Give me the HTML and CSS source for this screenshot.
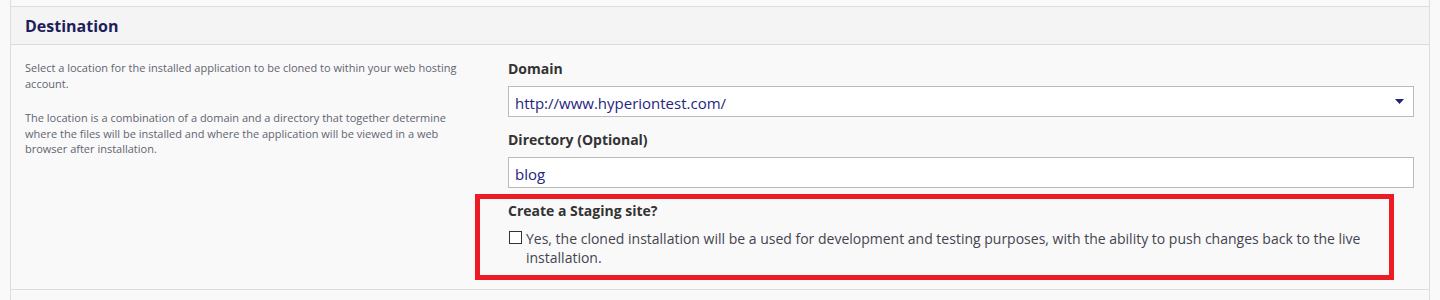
FILE: index.html
```html
<!DOCTYPE html>
<html lang="en">
<head>
<meta charset="utf-8">
<title>Destination</title>
<link rel="stylesheet" href="styles.css">
</head>
<body>
<div class="wrap">
  <section class="panel">
    <header class="panel-head">
      <h2 class="panel-title">Destination</h2>
    </header>
    <div class="panel-body">
      <div class="help">
        <p>Select a location for the installed application to be cloned to within your web hosting account.</p>
        <p>The location is a combination of a domain and a directory that together determine where the files will be installed and where the application will be viewed in a web browser after installation.</p>
      </div>
      <div class="fields">
        <div class="group">
          <div class="label">Domain</div>
          <div class="control select">
            <span class="value">http://www.hyperiontest.com/</span>
            <svg class="caret" width="9" height="5" viewBox="0 0 9 5"><path d="M0 0H9L4.5 5Z" fill="#23237f"/></svg>
          </div>
        </div>
        <div class="group">
          <div class="label">Directory (Optional)</div>
          <div class="control">
            <span class="value">blog</span>
          </div>
        </div>
        <div class="staging">
          <div class="label">Create a Staging site?</div>
          <div class="check-row">
            <span class="checkbox"></span>
            <span class="check-text">Yes, the cloned installation will be a used for development and testing purposes, with the ability to push changes back to the live installation.</span>
          </div>
        </div>
      </div>
    </div>
  </section>
</div>
</body>
</html>
```
FILE: styles.css
```css
html, body {
  margin: 0;
  padding: 0;
  background: #f9f9f9;
}
body {
  font-family: "Open Sans", "Liberation Sans", sans-serif;
  height: 300px;
  overflow: hidden;
}
.wrap {
  margin-left: 10px;
  width: 1420px;
  box-sizing: border-box;
  border-left: 1px solid #dddddd;
  border-right: 1px solid #dddddd;
  padding-top: 6px;
  min-height: 300px;
}
.panel-head {
  background: #f4f4f4;
  border-top: 1px solid #dddddd;
  border-bottom: 1px solid #dddddd;
  height: 37px;
  padding: 0 14px;
  display: flex;
  align-items: center;
}
.panel-title {
  margin: 0;
  font-size: 16px;
  font-weight: 700;
  color: #1e1e5c;
  line-height: 20px;
  padding-top: 1px;
}
.panel-body {
  display: grid;
  grid-template-columns: 440px 1fr;
  column-gap: 43px;
  padding: 14px 15px 9px 14px;
  border-bottom: 1px solid #dddddd;
}
.help {
  font-size: 11px;
  line-height: 15.5px;
  color: #626470;
}
.help p {
  margin: 1px 0 19px;
}
.label {
  font-size: 14px;
  font-weight: 700;
  line-height: 20px;
  color: #333333;
  margin-bottom: 7px;
}
.group {
  margin-bottom: 13px;
}
.group + .group {
  margin-bottom: 6px;
}
.control {
  height: 31px;
  box-sizing: border-box;
  border: 1px solid #bbbbbb;
  background: #ffffff;
  display: flex;
  align-items: center;
  justify-content: space-between;
  padding: 2px 9px 0 6px;
}
.value {
  font-size: 15px;
  color: #25257f;
}
.caret {
  display: block;
  margin-top: -2px;
}
.staging {
  margin-left: -33px;
  width: 919px;
  box-sizing: border-box;
  border: 5px solid #ed1c24;
  padding: 2px 0 8px 28px;
}
.staging .label {
  margin-bottom: 8px;
}
.check-row {
  display: flex;
  align-items: flex-start;
}
.checkbox {
  flex: none;
  width: 13px;
  height: 13px;
  box-sizing: border-box;
  border: 1px solid #333333;
  background: #ffffff;
  margin: 2px 4px 0 1px;
}
.check-text {
  font-size: 14px;
  line-height: 19px;
  color: #444450;
}
```
